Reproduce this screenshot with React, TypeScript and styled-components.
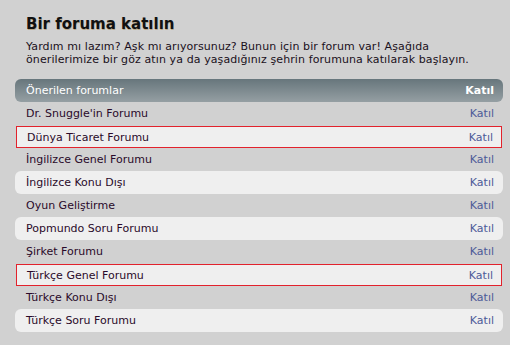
import React from "react";
import styled, { createGlobalStyle } from "styled-components";

const Global = createGlobalStyle`
  html, body { margin: 0; padding: 0; background: #d1d1d1; }
  body { font-family: "DejaVu Sans", Verdana, sans-serif; }
`;

const Page = styled.div`
  width: 510px;
  height: 345px;
  box-sizing: border-box;
  padding: 14px 7px 0 15px;
  background: #d1d1d1;
`;

const Title = styled.h1`
  margin: 0 0 0 11px;
  font-size: 15px;
  line-height: 20px;
  font-weight: bold;
  color: #111;
  text-shadow: 0.5px 0.5px 0 rgba(140, 90, 0, 0.35);
`;

const Intro = styled.p`
  margin: 6px 0 0 11px;
  font-size: 11px;
  line-height: 13px;
  color: #1a1020;
  letter-spacing: 0.1px;
`;

const Table = styled.div`
  margin-top: 13px;
  display: flex;
  flex-direction: column;
`;

const Header = styled.div`
  height: 23px;
  display: flex;
  align-items: center;
  justify-content: space-between;
  padding: 0 9px 0 11px;
  border-radius: 6px;
  background: linear-gradient(#67767c, #959fa3);
  color: #fff;
  font-size: 11px;
`;

const HeaderJoin = styled.span`
  font-weight: bold;
`;

const Row = styled.div<{ $alt?: boolean; $hl?: boolean }>`
  height: 23px;
  box-sizing: border-box;
  display: flex;
  align-items: center;
  justify-content: space-between;
  padding: 0 9px 0 11px;
  font-size: 11px;
  border-radius: ${(p) => (p.$alt ? "6px" : "0")};
  background: ${(p) => (p.$alt || p.$hl ? "#efefef" : "transparent")};
  ${(p) =>
    p.$hl
      ? `border: 1px solid #e2222c; margin: 1px 1px 0; height: 22px; padding: 0 8px 0 10px; border-radius: 0;`
      : ""}
`;

const Name = styled.span`
  color: #2a0a2a;
`;

const Join = styled.a`
  color: #4d5a98;
  text-decoration: none;
  cursor: pointer;
`;

const forums: { name: string; hl?: boolean }[] = [
  { name: "Dr. Snuggle'in Forumu" },
  { name: "Dünya Ticaret Forumu", hl: true },
  { name: "İngilizce Genel Forumu" },
  { name: "İngilizce Konu Dışı" },
  { name: "Oyun Geliştirme" },
  { name: "Popmundo Soru Forumu" },
  { name: "Şirket Forumu" },
  { name: "Türkçe Genel Forumu", hl: true },
  { name: "Türkçe Konu Dışı" },
  { name: "Türkçe Soru Forumu" },
];

export default function App() {
  return (
    <Page>
      <Global />
      <Title>Bir foruma katılın</Title>
      <Intro>
        Yardım mı lazım? Aşk mı arıyorsunuz? Bunun için bir forum var! Aşağıda
        <br />
        önerilerimize bir göz atın ya da yaşadığınız şehrin forumuna katılarak başlayın.
      </Intro>
      <Table>
        <Header>
          <span>Önerilen forumlar</span>
          <HeaderJoin>Katıl</HeaderJoin>
        </Header>
        {forums.map((f, i) => (
          <Row key={f.name} $hl={f.hl} $alt={!f.hl && i % 2 === 1}>
            <Name>{f.name}</Name>
            <Join>Katıl</Join>
          </Row>
        ))}
      </Table>
    </Page>
  );
}
